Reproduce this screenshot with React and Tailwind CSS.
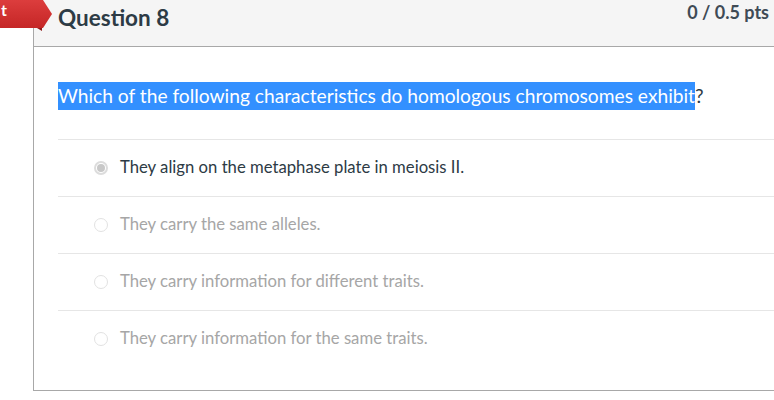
import React from 'react';

const options = [
  { text: 'They align on the metaphase plate in meiosis II.', selected: true },
  { text: 'They carry the same alleles.' },
  { text: 'They carry information for different traits.' },
  { text: 'They carry information for the same traits.' },
];

function Radio({ selected }) {
  if (selected) {
    return (
      <span className="flex h-[14px] w-[14px] shrink-0 items-center justify-center rounded-full border-2 border-[#dcdcdc] bg-white">
        <span className="h-[8px] w-[8px] rounded-full bg-[#c8c8c8]" />
      </span>
    );
  }
  return <span className="h-[14px] w-[14px] shrink-0 rounded-full border border-[#e2e2e2] bg-white" />;
}

export default function App() {
  return (
    <div className="relative h-[400px] w-[774px] overflow-hidden bg-white" style={{ fontFamily: 'Lato, "Open Sans", sans-serif' }}>
      {/* result ribbon */}
      <div className="absolute left-0 top-0 z-10 h-[31px] w-[54px]">
        <svg width="54" height="31" viewBox="0 0 54 31" className="absolute left-0 top-0">
          <defs>
            <linearGradient id="rb" x1="0" y1="0" x2="0" y2="1">
              <stop offset="0" stopColor="#dc3d3d" />
              <stop offset="1" stopColor="#c52626" />
            </linearGradient>
          </defs>
          <polygon points="37,28 42,28 42,31" fill="#8e1717" />
          <polygon points="0,0 43,0 52,14 43,28 0,28" fill="url(#rb)" />
        </svg>
        <span className="absolute left-[1px] top-[-1px] text-[16px] font-bold leading-[22px] text-white">t</span>
      </div>

      <div className="ml-[33px] h-[391px] w-[800px] border-b border-l border-[#a8a8a8]">
        <div className="flex h-[47px] items-start border-b border-[#a8a8a8] bg-[#f5f5f5] pl-[24px] pr-[64px]">
          <h2 className="mt-[1px] text-[22.5px] font-bold leading-[34px] text-[#2d3b45]">Question 8</h2>
          <span className="ml-auto mt-[-1px] text-[18px] font-bold leading-[27px] text-[#3f4b55]">0 / 0.5 pts</span>
        </div>

        <div className="pl-[24px]">
          <p className="pt-[35px] text-[19.2px] text-[#2d3b45]">
            <span className="inline-block bg-[#3390ff] leading-[28px] text-white">
              Which of the following characteristics do homologous chromosomes exhibit
            </span>
            ?
          </p>

          <div className="mt-[28px]">
            {options.map((o, i) => (
              <div key={i} className="flex h-[57px] items-center gap-[12px] border-t border-[#e6e6e6] pl-[36px]">
                <Radio selected={o.selected} />
                <span className={o.selected ? 'text-[16.7px] text-[#2d3b45]' : 'text-[16.7px] text-[#a6a6a6]'}>
                  {o.text}
                </span>
              </div>
            ))}
          </div>
        </div>
      </div>
    </div>
  );
}
